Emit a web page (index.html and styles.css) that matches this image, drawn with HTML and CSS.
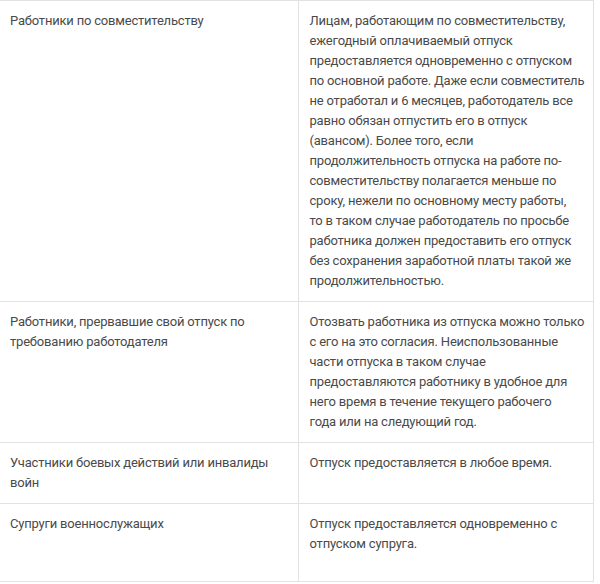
FILE: index.html
```html
<!DOCTYPE html>
<html lang="ru">
<head>
<meta charset="utf-8">
<title>Отпуск</title>
<link rel="stylesheet" href="styles.css">
</head>
<body>
<table class="grid">
  <colgroup><col class="c1"><col class="c2"></colgroup>
  <tbody>
    <tr>
      <td>Работники по совместительству</td>
      <td>Лицам, работающим по совместительству, ежегодный оплачиваемый отпуск предоставляется одновременно с отпуском по основной работе. Даже если совместитель не отработал и 6 месяцев, работодатель все равно обязан отпустить его в отпуск (авансом). Более того, если продолжительность отпуска на работе по-совместительству полагается меньше по сроку, нежели по основному месту работы,<br>то в таком случае работодатель по просьбе работника должен предоставить его отпуск без сохранения заработной платы такой же продолжительностью.</td>
    </tr>
    <tr>
      <td>Работники, прервавшие свой отпуск по требованию работодателя</td>
      <td>Отозвать работника из отпуска можно только с его на это согласия. Неиспользованные части отпуска в таком случае предоставляются работнику в удобное для него время в течение текущего рабочего<br>года или на следующий год.</td>
    </tr>
    <tr>
      <td>Участники боевых действий или инвалиды войн</td>
      <td>Отпуск предоставляется в любое время.</td>
    </tr>
    <tr class="last">
      <td>Супруги военнослужащих</td>
      <td>Отпуск предоставляется одновременно с отпуском супруга.</td>
    </tr>
  </tbody>
</table>
</body>
</html>
```
FILE: styles.css
```css
html, body {
  margin: 0;
  padding: 0;
  background: #ffffff;
}

.grid {
  width: 593px;
  border-collapse: collapse;
  table-layout: fixed;
  font-family: Roboto, "Liberation Sans", sans-serif;
  font-size: 13px;
  line-height: 20px;
  letter-spacing: -0.2px;
  color: #4a4a4a;
}

.c1 { width: 298px; }
.c2 { width: 295px; }

.grid td {
  vertical-align: top;
  padding: 10px 8px 10px 10px;
  border-top: 1px solid #e2e2e2;
  border-bottom: 1px solid #e2e2e2;
}

.grid td + td {
  padding-left: 11px;
  border-left: 1px solid #e2e2e2;
  border-right: 1px solid #e2e2e2;
}

.grid tr.last td {
  padding-bottom: 27px;
}
```
